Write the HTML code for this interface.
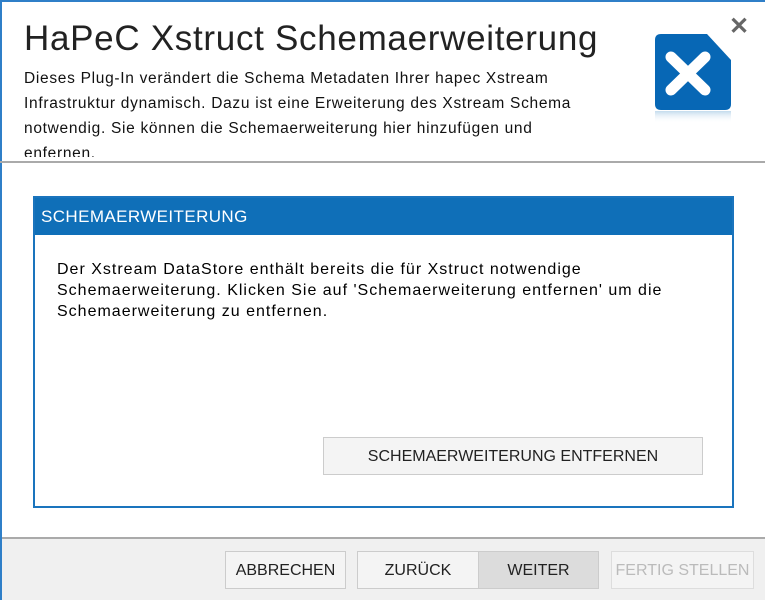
<!DOCTYPE html>
<html><head><meta charset="utf-8"><style>
*{margin:0;padding:0;box-sizing:border-box}
body{width:765px;height:600px;background:#fff;position:relative;overflow:hidden;font-family:"Liberation Sans",sans-serif;color:#000}
.bl{position:absolute;left:0;top:0;width:2px;height:600px;background:#2f7fc8}
.bt{position:absolute;left:0;top:0;width:765px;height:2px;background:#2f7fc8}
.title{position:absolute;left:24px;top:19px;font-size:35px;color:#222;letter-spacing:0.7px;white-space:nowrap}
.desc{position:absolute;left:24px;top:66px;width:620px;height:91px;overflow:hidden;font-size:15.5px;line-height:25px;color:#111;white-space:nowrap;letter-spacing:0.7px}
.sep{position:absolute;left:0;top:161px;width:765px;height:2px;background:#aaa}
.close{position:absolute;left:729px;top:12px;font-size:24px;color:#666;font-weight:bold}
.panel{position:absolute;left:33px;top:196px;width:701px;height:312px;border:2px solid #1a74bd}
.ph{height:37px;background:#0f6fb8;color:#fff;font-size:17px;padding:9px 0 0 6px;letter-spacing:0.4px}
.pt{position:absolute;left:22px;top:61px;font-size:16px;line-height:21px;width:670px;white-space:nowrap;letter-spacing:1px}
.btn{position:absolute;border:1px solid #ccc;background:#f4f4f4;font-size:16px;text-align:center;color:#222}
.foot{position:absolute;left:2px;top:537px;width:763px;height:63px;background:#f0f0f0;border-top:2px solid #aaa}
</style></head><body>
<div class="bt"></div><div class="bl"></div>
<div class="title">HaPeC Xstruct Schemaerweiterung</div>
<div class="desc">Dieses Plug-In verändert die Schema Metadaten Ihrer hapec Xstream<br>Infrastruktur dynamisch. Dazu ist eine Erweiterung des Xstream Schema<br>notwendig. Sie können die Schemaerweiterung hier hinzufügen und<br>enfernen.</div>
<svg style="position:absolute;left:655px;top:34px" width="78" height="92" viewBox="0 0 78 92">
<defs><linearGradient id="g" x1="0" y1="0" x2="0" y2="1"><stop offset="0" stop-color="#0f6fb8" stop-opacity=".25"/><stop offset="1" stop-color="#fff" stop-opacity="0"/></linearGradient></defs>
<path d="M6 0H52L76 26V70Q76 76 70 76H6Q0 76 0 70V6Q0 0 6 0Z" fill="#0767b5"/>
<rect x="0" y="77" width="76" height="12" fill="url(#g)"/>
<path d="M16 23L50 56M50 23L16 56" stroke="#fff" stroke-width="11" stroke-linecap="round"/>
</svg>
<div class="close">✕</div>
<div class="sep"></div>
<div class="panel"><div class="ph">SCHEMAERWEITERUNG</div>
<div class="pt">Der Xstream DataStore enthält bereits die für Xstruct notwendige<br>Schemaerweiterung. Klicken Sie auf 'Schemaerweiterung entfernen' um die<br>Schemaerweiterung zu entfernen.</div>
</div>
<div class="btn" style="left:323px;top:437px;width:380px;height:38px;line-height:37px">SCHEMAERWEITERUNG ENTFERNEN</div>
<div class="foot"></div>
<div class="btn" style="left:225px;top:551px;width:121px;height:38px;line-height:37px">ABBRECHEN</div>
<div class="btn" style="left:357px;top:551px;width:122px;height:38px;line-height:37px">ZURÜCK</div>
<div class="btn" style="left:478px;top:551px;width:121px;height:38px;line-height:37px;background:#dcdcdc">WEITER</div>
<div class="btn" style="left:611px;top:551px;width:143px;height:38px;line-height:37px;color:#bbb;border-color:#ddd">FERTIG STELLEN</div>
</body></html>
